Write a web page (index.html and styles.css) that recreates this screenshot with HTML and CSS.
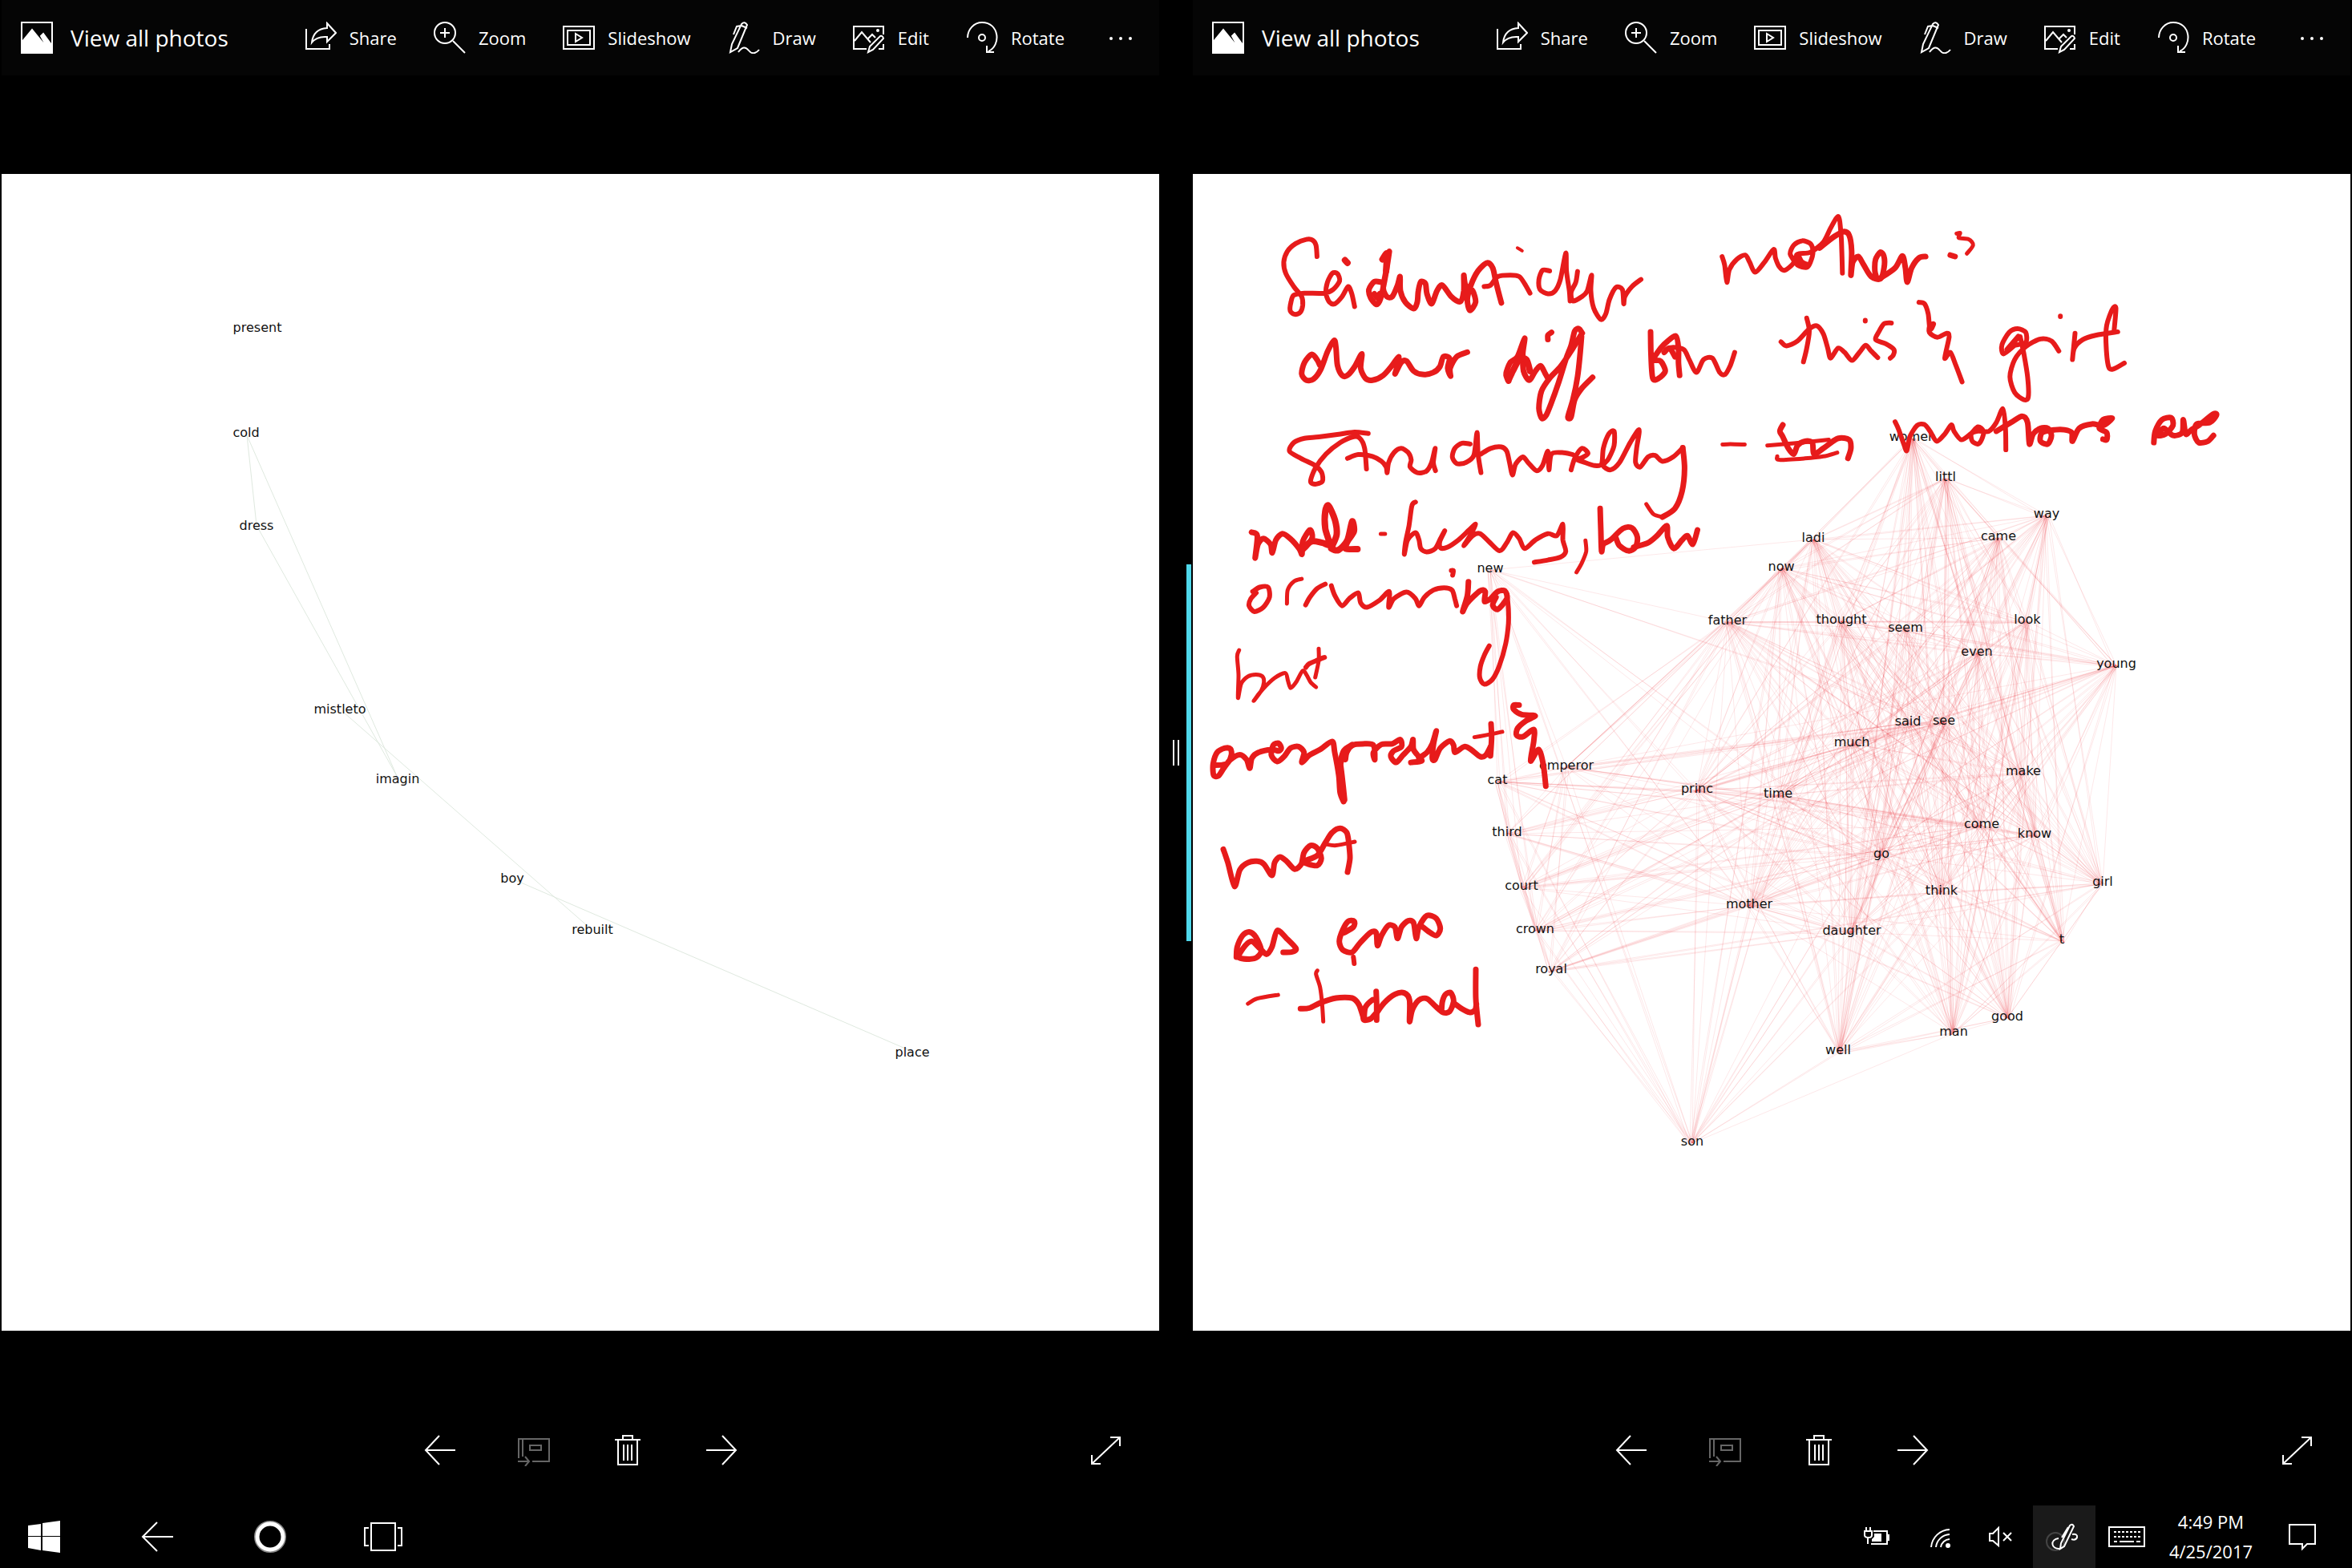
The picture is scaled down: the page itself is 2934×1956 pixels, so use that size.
FILE: index.html
```html
<!DOCTYPE html>
<html lang="en">
<head>
<meta charset="utf-8">
<meta name="viewport" content="width=device-width, initial-scale=1">
<title>Photos</title>
<link rel="stylesheet" href="styles.css">
</head>
<body>
<svg class="sprite" aria-hidden="true">
  <symbol id="i-photo" viewBox="0 0 40 40"><path d="M1 1H39V39H1Z"/><path class="solid" d="M1 26L14 10L35 36L25 18L28 15L39 30V39H1Z"/></symbol>
  <symbol id="i-share" viewBox="0 0 40 40"><path d="M2 9V34H31V28M28 2L39 14L28 25V19Q15 18 9 26Q11 9 28 8Z"/></symbol>
  <symbol id="i-zoom" viewBox="0 0 40 40"><circle cx="14" cy="14" r="13"/><path d="M24 24L39 39M14 8V20M8 14H20"/></symbol>
  <symbol id="i-slideshow" viewBox="0 0 40 40"><path d="M1 6H39V34H1ZM6 11H34V29H6ZM16 15L24 20L16 25Z"/></symbol>
  <symbol id="i-draw" viewBox="0 0 40 40"><path d="M3 38L5 28L17 3Q21 -1 24 4L12 33ZM17 5L11 6L7 16M17 5L24 8M13 38C18 31 22 31 26 36S35 40 39 35"/></symbol>
  <symbol id="i-edit" viewBox="0 0 40 40"><path d="M17 34H1V6H38V16M38 28V34H32M2 24L11 13L22 26M19 21L24 16L28 20M19 38L21 31L34 18Q37 17 38 21L25 35Z"/><circle class="solid" cx="31" cy="11" r="1"/></symbol>
  <symbol id="i-rotate" viewBox="0 0 40 40"><path d="M2 20A18 19 0 0 1 20 1C42 1 44 30 28 37M26 30V38H35"/><circle cx="20" cy="20" r="4"/></symbol>
  <symbol id="i-more" viewBox="0 0 40 40"><circle class="solid" cx="8" cy="21" r="1"/><circle class="solid" cx="20" cy="21" r="1"/><circle class="solid" cx="32" cy="21" r="1"/></symbol>
  <symbol id="i-prev" viewBox="0 0 40 40"><path d="M39 20H2M19 2L2 20L19 38"/></symbol>
  <symbol id="i-next" viewBox="0 0 40 40"><path d="M1 20H38M21 2L38 20L21 38"/></symbol>
  <symbol id="i-album" viewBox="0 0 40 40"><path d="M1 30V6H39V34H18M6 6V28M15 14H29V20H15ZM0 34H14M9 28L14 34L9 40"/></symbol>
  <symbol id="i-trash" viewBox="0 0 40 40"><path d="M4 7H36M14 7V2H26V7M8 7V38H32V7M15 13V33M20 13V33M25 13V33"/></symbol>
  <symbol id="i-expand" viewBox="0 0 40 40"><path d="M3 37L38 4M26 4H38V15M3 26V37H14"/></symbol>
</svg>

<main class="split">
  <section class="viewer" aria-label="Photo, left window">
    <header class="toolbar">
      <button class="home" type="button"><svg class="icon"><use href="#i-photo"/></svg>View all photos</button>
      <nav class="tools" aria-label="Photo tools">
        <button class="tool" type="button"><svg class="icon"><use href="#i-share"/></svg>Share</button>
        <button class="tool" type="button"><svg class="icon"><use href="#i-zoom"/></svg>Zoom</button>
        <button class="tool" type="button"><svg class="icon"><use href="#i-slideshow"/></svg>Slideshow</button>
        <button class="tool" type="button"><svg class="icon"><use href="#i-draw"/></svg>Draw</button>
        <button class="tool" type="button"><svg class="icon"><use href="#i-edit"/></svg>Edit</button>
        <button class="tool" type="button"><svg class="icon"><use href="#i-rotate"/></svg>Rotate</button>
        <button class="more" type="button" aria-label="More"><svg class="icon"><use href="#i-more"/></svg></button>
      </nav>
    </header>
    <svg class="photo" viewBox="2 217 1444 1443" role="img" aria-label="Word graph">
      <g class="edges edges-green">
        <path d="M308 543L320 655M308 543L495 968M322 659L495 968M428 888L735 1157M643 1098L1134 1310"/>
      </g>
      <g class="labels">
        <text x="321" y="409">present</text>
        <text x="307" y="540">cold</text>
        <text x="320" y="656">dress</text>
        <text x="424" y="885">mistleto</text>
        <text x="496" y="972">imagin</text>
        <text x="639" y="1096">boy</text>
        <text x="739" y="1160">rebuilt</text>
        <text x="1138" y="1313">place</text>
      </g>
    </svg>
    <footer class="controls">
      <div class="steps">
        <button type="button" aria-label="Previous"><svg class="icon"><use href="#i-prev"/></svg></button>
        <button type="button" aria-label="Add to album" disabled><svg class="icon"><use href="#i-album"/></svg></button>
        <button type="button" aria-label="Delete"><svg class="icon"><use href="#i-trash"/></svg></button>
        <button type="button" aria-label="Next"><svg class="icon"><use href="#i-next"/></svg></button>
      </div>
      <button class="expand" type="button" aria-label="Full screen"><svg class="icon"><use href="#i-expand"/></svg></button>
    </footer>
  </section>

  <div class="divider" role="separator" aria-orientation="vertical"><span class="grip"></span><span class="accent"></span></div>

  <section class="viewer" aria-label="Photo, right window">
    <header class="toolbar">
      <button class="home" type="button"><svg class="icon"><use href="#i-photo"/></svg>View all photos</button>
      <nav class="tools" aria-label="Photo tools">
        <button class="tool" type="button"><svg class="icon"><use href="#i-share"/></svg>Share</button>
        <button class="tool" type="button"><svg class="icon"><use href="#i-zoom"/></svg>Zoom</button>
        <button class="tool" type="button"><svg class="icon"><use href="#i-slideshow"/></svg>Slideshow</button>
        <button class="tool" type="button"><svg class="icon"><use href="#i-draw"/></svg>Draw</button>
        <button class="tool" type="button"><svg class="icon"><use href="#i-edit"/></svg>Edit</button>
        <button class="tool" type="button"><svg class="icon"><use href="#i-rotate"/></svg>Rotate</button>
        <button class="more" type="button" aria-label="More"><svg class="icon"><use href="#i-more"/></svg></button>
      </nav>
    </header>
    <svg class="photo" viewBox="1488 217 1444 1443" role="img" aria-label="Word graph with handwritten notes">
      <g class="edges edges-red" id="edges"></g>
      <g class="labels" id="words">
        <text x="2386" y="545">women</text>
        <text x="2427" y="595">littl</text>
        <text x="2553" y="641">way</text>
        <text x="2493" y="669">came</text>
        <text x="2262" y="671">ladi</text>
        <text x="2222" y="707">now</text>
        <text x="1859" y="709">new</text>
        <text x="2155" y="774">father</text>
        <text x="2297" y="773">thought</text>
        <text x="2377" y="783">seem</text>
        <text x="2529" y="773">look</text>
        <text x="2466" y="813">even</text>
        <text x="2640" y="828">young</text>
        <text x="2380" y="900">said</text>
        <text x="2425" y="899">see</text>
        <text x="2310" y="926">much</text>
        <text x="1954" y="955">emperor</text>
        <text x="1868" y="973">cat</text>
        <text x="2117" y="984">princ</text>
        <text x="2218" y="990">time</text>
        <text x="2524" y="962">make</text>
        <text x="1880" y="1038">third</text>
        <text x="2472" y="1028">come</text>
        <text x="2538" y="1040">know</text>
        <text x="2347" y="1065">go</text>
        <text x="1898" y="1105">court</text>
        <text x="2422" y="1111">think</text>
        <text x="2182" y="1128">mother</text>
        <text x="2623" y="1100">girl</text>
        <text x="1915" y="1159">crown</text>
        <text x="2310" y="1161">daughter</text>
        <text x="2572" y="1172">t</text>
        <text x="1935" y="1209">royal</text>
        <text x="2504" y="1268">good</text>
        <text x="2437" y="1287">man</text>
        <text x="2293" y="1310">well</text>
        <text x="2111" y="1424">son</text>
      </g>
      <g class="ink" id="ink"></g>
    </svg>
    <footer class="controls">
      <div class="steps">
        <button type="button" aria-label="Previous"><svg class="icon"><use href="#i-prev"/></svg></button>
        <button type="button" aria-label="Add to album" disabled><svg class="icon"><use href="#i-album"/></svg></button>
        <button type="button" aria-label="Delete"><svg class="icon"><use href="#i-trash"/></svg></button>
        <button type="button" aria-label="Next"><svg class="icon"><use href="#i-next"/></svg></button>
      </div>
      <button class="expand" type="button" aria-label="Full screen"><svg class="icon"><use href="#i-expand"/></svg></button>
    </footer>
  </section>
</main>

<footer class="taskbar">
  <div class="system">
    <button type="button" aria-label="Start"><svg class="icon" viewBox="0 0 40 40"><path class="fill" d="M0 6L16 4V19H0ZM18 3L40 0V19H18ZM0 20H16V37L0 34ZM18 20H40V40L18 37Z"/></svg></button>
    <button type="button" aria-label="Back"><svg class="icon" viewBox="0 0 40 40"><path d="M40 20H2M20 2L2 20L20 38"/></svg></button>
    <button type="button" aria-label="Cortana"><svg class="icon" viewBox="0 0 40 40"><circle class="halo" cx="20" cy="20" r="17"/><circle class="ring" cx="20" cy="20" r="16"/></svg></button>
    <button type="button" aria-label="Task view"><svg class="icon wide" viewBox="0 0 48 40"><path d="M9 3H39V37H9ZM6 9H1V31H6M42 9H47V31H42"/></svg></button>
  </div>
  <div class="tray">
    <button type="button" aria-label="Battery, charging"><svg class="icon" viewBox="0 0 40 40"><path d="M16 13H33V29H13M33 18H35V24H33M7 8V13M12 8V13M5 13H14V18Q14 21 10 21Q5 21 5 18ZM9 21V29"/><path class="fill" d="M17 16H26V26H14V23L17 20Z"/></svg></button>
    <button type="button" aria-label="Wi-Fi"><svg class="icon" viewBox="0 0 40 40"><path d="M10 33A24 24 0 0 1 33 11M16 33A18 18 0 0 1 33 17M22 33A12 12 0 0 1 33 23"/><circle class="fill" cx="31" cy="31" r="3"/></svg></button>
    <button type="button" aria-label="Volume, muted"><svg class="icon" viewBox="0 0 40 40"><path d="M5 16H9L16 9V31L9 25H5ZM22 15L32 25M32 15L22 25"/></svg></button>
    <button class="pen" type="button" aria-label="Windows Ink"><svg class="icon" viewBox="0 0 40 40"><circle class="dim" cx="9" cy="26" r="11"/><path d="M15 35C3 36 2 23 13 22M15 35L16 28L27 6Q30 3 32 7L20 32ZM25 8L17 21M30 17Q37 16 36 21Q34 25 29 23"/></svg></button>
    <button type="button" aria-label="Touch keyboard"><svg class="icon wide" viewBox="0 0 48 40"><path d="M2 8H46V32H2Z"/><path class="dots" d="M8 14H41M8 20H41"/><path d="M8 26H12M15 26H33M36 26H41"/></svg></button>
    <button class="clock" type="button"><span>4:49 PM</span><span>4/25/2017</span></button>
    <button class="notes" type="button" aria-label="Notifications"><svg class="icon" viewBox="0 0 40 40"><path d="M4 5H36V29H26L20 35V29H4Z"/></svg></button>
  </div>
</footer>
<script src="script.js"></script>
</body>
</html>
```
FILE: styles.css
```css
* { box-sizing: border-box; }

body {
  margin: 0;
  min-height: 100vh;
  display: flex;
  flex-direction: column;
  background: #000;
  color: #fff;
  font-family: "Open Sans", "Noto Sans", sans-serif;
  font-size: 22px;
  line-height: 30px;
}

button {
  display: flex;
  align-items: center;
  justify-content: center;
  margin: 0;
  padding: 0;
  border: 0;
  background: none;
  color: inherit;
  font: inherit;
}

.sprite { display: none; }

.icon {
  display: block;
  flex: none;
  width: 40px;
  height: 40px;
  overflow: visible;
  fill: none;
  stroke: currentColor;
  stroke-width: 2;
}
.icon.wide { width: 48px; }
.solid { fill: currentColor; }
.fill { fill: currentColor; stroke: none; }

/* Two snapped windows */
.split {
  flex: 1;
  display: grid;
  grid-template-columns: 1fr 42px 1fr;
  padding: 0 2px;
}
.viewer {
  display: flex;
  flex-direction: column;
  min-width: 0;
}

.toolbar {
  display: flex;
  align-items: center;
  justify-content: space-between;
  height: 94px;
  padding: 0 24px;
  background: #050505;
  white-space: nowrap;
}
.home {
  gap: 22px;
  font-size: 28px;
}
.tools {
  display: flex;
  align-items: center;
  gap: 46px;
}
.tool { gap: 16px; }
.more { width: 48px; }

.photo {
  display: block;
  width: 100%;
  height: auto;
  margin: 123px 0 auto;
  background: #fff;
}
.labels {
  fill: #111;
  font-family: "DejaVu Sans", sans-serif;
  font-size: 16px;
  text-anchor: middle;
  dominant-baseline: middle;
}
.edges { fill: none; }
.edges-green { stroke: #dfe9df; stroke-width: 1; }
.edges-red { stroke: #ea2f3a; stroke-opacity: 0.11; stroke-width: 1; }
.ink {
  fill: none;
  stroke: #e71b1b;
  stroke-width: 7;
  stroke-linecap: round;
  stroke-linejoin: round;
}

.controls {
  display: grid;
  grid-template-columns: 1fr auto 1fr;
  align-items: center;
  height: 138px;
  padding: 0 47px;
}
.steps {
  grid-column: 2;
  display: flex;
  gap: 77px;
}
.steps button:disabled { color: #666; }
.expand { justify-self: end; }

.divider {
  display: grid;
  grid-template: 1fr / 1fr;
  align-items: center;
}
.grip,
.accent { grid-area: 1 / 1; }
.grip {
  justify-self: center;
  width: 8px;
  height: 32px;
  border: solid #eee;
  border-width: 0 2px;
}
.accent {
  justify-self: end;
  width: 6px;
  height: 25%;
  margin-right: 2px;
  background: #4fd8eb;
}

/* Taskbar */
.taskbar {
  display: flex;
  justify-content: space-between;
  height: 78px;
  padding: 0 15px 0 0;
}
.system,
.tray { display: flex; }
.system button { width: 141px; }
.system button:first-child { width: 110px; margin-right: 15px; }
.tray button { width: 78px; }
.ring { stroke-width: 5; }
.halo { stroke: #888; stroke-width: 6; }
.dim { stroke: #444; }
.dots { stroke-dasharray: 3 2; }
.tray .pen { background: #1a1a1a; }
.tray .clock {
  width: 132px;
  flex-direction: column;
  line-height: 37px;
}
.tray .notes { width: 95px; }
```
FILE: script.js
```js
// Draws the edges of the word graph and the pen strokes written over it.
const NS = 'http://www.w3.org/2000/svg';

function addPath(parent, d, width) {
  const path = document.createElementNS(NS, 'path');
  path.setAttribute('d', d);
  if (width) path.style.strokeWidth = width;
  parent.appendChild(path);
}

// Words of the palace group have fewer links than the rest.
const palace = ['new', 'emperor', 'cat', 'third', 'court', 'crown', 'royal', 'son'];
const palaceLinks = ['princ', 'mother', 'father', 'daughter', 'said', 'see', 'time', 'ladi', 'now', 'young', 'come', 'go'];
const extraLinks = ['son-man', 'well-son', 'think-son', 'thought-son', 'girl-royal', 'know-court'];
const noLinks = ['ladi-royal', 'now-third', 'ladi-crown', 'new-young', 'now-new', 'new-said', 'new-come', 'new-daughter',
  'now-cat', 'young-third', 'young-cat', 'new-royal', 'ladi-cat', 'young-son', 'young-royal'];

const words = [...document.querySelectorAll('#words text')].map(t => ({
  name: t.textContent, x: +t.getAttribute('x'), y: +t.getAttribute('y') + 2
}));

function linked(a, b) {
  const key = a + '-' + b, back = b + '-' + a;
  if (noLinks.includes(key) || noLinks.includes(back)) return false;
  if (extraLinks.includes(key) || extraLinks.includes(back)) return true;
  const pa = palace.includes(a), pb = palace.includes(b);
  if (pa && pb) return true;
  if (pa) return palaceLinks.includes(b);
  if (pb) return palaceLinks.includes(a);
  return true;
}

const edges = document.getElementById('edges');
words.forEach((a, i) => {
  words.slice(i + 1).forEach((b, j) => {
    if (!linked(a.name, b.name)) return;
    addPath(edges, `M${a.x} ${a.y}L${b.x} ${b.y}`);
    if ((i * 7 + j * 5) % 3) {
      const s = (i + j) % 2 ? 3 : -3;
      addPath(edges, `M${a.x + s} ${a.y}L${b.x - s} ${b.y + 2}`);
    }
  });
});

// Pen strokes, one sheet per part of the page: origin, units per pixel, strokes.
// A stroke is a list of points, with its own pen width after the bar.
const sheets = [
  { x: 1480, y: 220, ux: 2.24, uy: 2.8, strokes: [
    '365,280 362,240 352,222 335,220 305,235 282,262 272,300 278,340 300,385 322,420 325,450 318,475 303,482 290,470 292,440 300,415 330,408 385,408 410,395 428,365 422,340 408,338 394,370 390,410 400,440 415,445 435,420 452,385 462,410 470,455|6',
    '443,293 450,302|8',
    '545,370 525,368 510,395 515,425 530,447 540,435 548,400 560,320 567,262 558,330 550,390 560,420 575,420 590,380 597,350 598,400 612,440 635,462 645,440 648,400 655,368 668,375 672,410 685,445 700,400 715,380 740,420 765,438 775,400 775,345 780,380 800,400 808,440 792,468 785,430 795,380 815,330 840,302 856,320 865,370 880,442',
    '548,290 560,270 558,330|8',
    '525,410 533,425 540,410',
    '832,385 850,380 870,350 905,345 930,350 945,375 960,408|6',
    '925,250 938,260|4',
    '1015,330 995,328 985,360 988,395 1010,410 1030,400 1045,360 1060,268 1062,330 1070,400 1072,435|6',
    '1093,332 1088,370 1075,405 1080,435 1105,420 1120,400 1132,345 1130,400 1138,460 1158,500 1172,480 1182,430 1200,388 1218,395 1222,445 1225,420 1245,385 1270,360|6',
    '373,660 365,640 350,622 330,650 322,690 335,712 355,708 375,675 395,610 413,573 418,600 422,660 435,695 450,695 470,665 490,620 487,670 500,705 520,712 550,695 575,660 593,630 590,660 583,690 600,650 615,645 635,680 660,692 690,685 708,665 718,630 735,635 730,670 738,698 737,670 755,630 785,614',
    '900,715 893,690 905,650 925,630 945,565 940,620 942,680 958,712 975,680 990,662 1003,690 1010,705',
    '900,712 912,680 930,640 950,640 960,680|8',
    '1106,548 1097,532 1085,540 1075,590 1060,640 1040,720 1020,790 1005,835 993,845 985,810 992,750 1015,705 1045,665 1075,610 1102,555',
    '1104,560 1100,620 1093,700 1080,780 1066,840 1075,840 1085,780 1105,740 1135,702',
    '1010,570 1010,555 1020,545',
    '1297,543 1298,620 1303,705 1320,705 1338,680 1325,645 1305,640 1325,600 1345,575 1368,558 1375,600 1375,650 1378,695',
    '1335,615 1350,600 1365,630',
    '1340,605 1360,597 1390,605 1405,640 1425,685 1445,640 1470,635 1490,685 1505,692 1520,660 1532,615|6',
    '508,898 470,893 430,900 370,910 330,915 300,930 288,960 320,985 360,1010 378,1035 380,1065 360,1075 347,1065 360,1020 390,970 430,930 465,910 485,915 498,950 503,1022|6',
    '450,985 480,972 520,978 545,995 558,1015 561,1035 565,1000 580,965 600,950 620,965 628,990 625,1015 645,1035 670,1030 685,1000 695,950 690,1000 696,1028|6',
    '793,935 770,932 750,950 743,980 755,1003 780,1000 803,975 812,895 815,970 823,1035|6',
    '823,970 850,950 880,945 895,960 903,1000 911,1043 920,1005 940,980 955,1000 978,1028 995,1010 1010,960 1013,1025 1020,970 1050,965 1080,972|6',
    '1075,1025 1085,985 1105,950 1122,968 1100,985 1085,985 1110,998 1140,1010 1160,1005 1165,950 1180,900 1195,890 1195,940 1180,985 1165,1010 1185,1025 1210,1000 1240,930 1265,885 1258,950 1255,1000 1268,1015 1290,980 1310,975 1330,995 1360,980 1387,948|6',
    '1387,948 1392,1020 1385,1100 1365,1160 1330,1190',
    '1330,1190 1305,1180 1285,1145|5',
    '1498,937 1520,935 1560,937|5',
    '182,1243 198,1255 192,1333 200,1285 215,1265 235,1285 240,1315 250,1270 268,1248 290,1265 315,1300 323,1320 325,1275 345,1235 352,1260 340,1285 325,1305',
    '325,1300 350,1275 380,1280 400,1285 388,1230 388,1170 397,1150 415,1200 420,1250 408,1290 405,1300 425,1305 450,1270 463,1205 468,1240 450,1275 445,1300 478,1302|8',
    '543,1249 555,1249|5',
    '640,1138 630,1150 622,1220 612,1280 609,1320 618,1270 640,1245 650,1270 655,1300 672,1312 695,1300 710,1265 722,1238 708,1275 710,1298 730,1295 760,1270 790,1235 808,1215 795,1250 775,1290 800,1255 820,1248 845,1275 875,1308 895,1280 912,1245 930,1265 945,1300 975,1270 1010,1248 1035,1255 1052,1215 1052,1270 1060,1310 1045,1330 1010,1340 972,1348|6',
    '1115,1272 1117,1310 1105,1350 1090,1383|5',
    '1156,1160 1158,1240 1160,1310 1165,1285 1185,1270 1220,1230 1245,1228 1260,1260 1255,1295 1235,1308 1210,1290 1200,1262',
    '1250,1295 1290,1280 1315,1255 1342,1220 1345,1260 1362,1300 1385,1270 1400,1255 1415,1285 1428,1235',
    '185,1450 205,1435 228,1435 232,1470 215,1505 190,1520 175,1500 180,1475 195,1455|6',
    '322,1406 300,1415 283,1445 281,1492|5',
    '388,1424 365,1440 345,1470 333,1497|6',
    '405,1430 415,1465 435,1500 455,1475 480,1455 487,1490 505,1505 540,1480 567,1450 565,1505 580,1475 615,1452 640,1475 650,1500 665,1470 690,1445 720,1437 742,1445 750,1475 755,1500|6',
    '740,1377 746,1377 744,1393|6',
    '788,1416 785,1465 772,1520 785,1490 820,1448 835,1450 833,1485 850,1475 870,1450 890,1448 895,1475 870,1512 856,1498 865,1470'
  ] },
  { x: 2100, y: 220, ux: 2.178, uy: 2.8, strokes: [
    '105,280 112,310 118,370 125,325 145,290 168,275 180,300 195,335 220,300 245,255 250,285 260,315 275,328 300,300 290,270 300,240 322,225 345,235 352,265 345,300 335,318 310,310 305,285 315,270 345,265 380,230 400,180 421,140 428,200 430,250 432,338|6',
    '310,275 320,300 335,310|8',
    '370,250 410,210 435,193 450,205 457,260 455,345 460,300 475,280 490,310 510,350 535,358 545,320 545,280 535,265 522,290 520,330 525,355',
    '535,356 575,320 595,278 603,320 608,370 620,320 640,285 658,280',
    '725,275 738,280|7',
    '742,200 752,198 748,215 775,220 787,240 770,270|5',
    '335,495 342,540 335,600 326,648|6',
    '265,578 280,592 310,575 340,535 362,522 380,550 392,600 400,635 420,600 438,615 458,643 478,615 495,590 510,610 528,633|6',
    '494,503 494,505|6',
    '565,512 545,515 530,545 522,570 550,585 572,605 570,625 562,635|6',
    '640,440 655,445 665,480 670,535 680,515 670,520 668,545 690,562 715,548 722,560 710,635 725,615 740,660 757,718|6',
    '900,590 870,620 865,590 885,545 908,532 930,545 930,580 900,590|6',
    '910,560 880,605',
    '915,560 925,620 935,700 937,770 925,780 900,755 887,700 900,640 930,595 970,568 1000,575 1020,610|6',
    '1024,488 1024,490|6',
    '1064,548 1060,600 1057,640 1062,600 1085,570 1120,555 1180,543|6',
    '1170,540 1175,460 1165,465 1150,520 1148,580 1155,665 1170,672 1198,652|6',
    '270,868 262,890 270,910 285,950 300,970 310,940 330,925 350,930 355,970 380,950 420,915 450,920 455,950 447,985',
    '228,940 300,932 395,920|5',
    '255,978 260,990 330,985 380,978 418,965|5',
    '575,857 585,885 600,940 607,958 615,910 635,870 655,867 670,890 688,925 710,900 728,868 735,890 755,920 780,900 800,875 815,890 810,920 800,935 785,925 782,900 800,890 830,890 850,860 868,812 875,880 876,955|6',
    '850,890 890,860 920,838 935,860 940,935 950,900 970,880 990,880 1000,905 990,935 970,925 975,895 1010,885 1035,885 1055,895 1057,925 1075,880 1110,865 1140,870 1165,845 1140,850 1130,880 1150,895 1150,920 1140,918',
    '1278,930 1282,890 1300,850 1325,843 1330,870 1310,900 1290,905 1305,880 1330,905 1355,895 1358,850 1365,900 1380,885 1400,870 1440,830 1448,835 1430,860 1395,865 1388,900 1400,930 1425,925 1440,905'
  ] },
  { x: 1480, y: 760, ux: 3, uy: 2.8, strokes: [
    '1200,-52 1205,0 1205,50 1195,120 1170,200 1145,245 1115,262 1098,240 1100,200 1115,160 1133,128|6',
    '197,143 190,165 195,230 193,310 205,260 230,235 260,228 285,235 290,255 280,285 252,320 285,280 330,240 370,223 380,250 390,275 410,255 435,215 450,230 465,255 485,272|5',
    '495,138 495,180 482,238|5',
    '447,203 460,190 490,178 517,168|6',
    '100,545 150,540 168,510 165,488 145,485 115,500 100,540 102,580 120,582 140,555 165,525 200,508 225,525 237,555 245,520 270,500 320,490 345,495 355,485 345,468 325,475 318,510 340,532 365,515 390,485 420,480 440,500 432,535 460,510 500,490 545,462 555,500 570,580 575,640 588,672',
    '592,665 582,580 575,530',
    '575,540 590,495 620,475|8',
    '595,525 600,500 620,475 660,470 700,475 705,525 700,500 730,472 770,470 800,455 805,480 775,495 765,515 785,535 810,510 840,480 848,455 850,490 870,515 880,530 840,535',
    '870,520 900,500 920,470 935,425 925,470 920,520 930,525 950,485 985,460 1000,475 1005,500 1040,480 1065,490 1100,515 1120,510 1138,480',
    '1140,400 1142,450 1138,512',
    '1078,447 1120,440 1182,428|5',
    '1245,335 1225,335 1225,350 1255,368 1305,372 1270,390 1240,415 1235,440 1260,445 1300,420 1300,460 1288,530 1318,490 1335,540 1345,618',
    '138,838 155,885 180,968 200,910 230,885 265,880 290,890 320,930 330,885 350,865 375,880 405,908 430,890 440,850 465,825 490,835 505,870 490,895 455,890 440,880 490,860 520,815 545,780 575,765 600,780 608,820 612,870 603,918',
    '520,820 560,825 630,812|5',
    '187,1215 190,1180 210,1140 235,1127 260,1145 280,1190 265,1215 235,1222 195,1215 220,1175 245,1160 275,1185 300,1205 320,1180 340,1122 375,1150 410,1185 395,1197 362,1198',
    '590,1130 625,1110 628,1090 605,1090 585,1120 572,1160 585,1190 620,1198 650,1165 690,1128 710,1130 715,1175 730,1140 755,1105 780,1110 790,1150 805,1110 830,1088 850,1095 860,1150 870,1110 900,1070 935,1080 950,1115 935,1140 905,1125 885,1110',
    '625,1215 628,1238|6',
    '230,1378 265,1360 343,1347|5',
    '490,1262 485,1275 500,1320 508,1380 512,1440|5',
    '427,1395 460,1393 500,1375 560,1358 620,1358 645,1380 660,1420 665,1435 690,1430 710,1410',
    '665,1425 670,1390 695,1365 705,1365',
    '710,1335 712,1380 712,1435',
    '712,1410 740,1375 780,1345 815,1340 835,1365 835,1440 845,1400 870,1365 900,1360 930,1385 960,1408 985,1405 1000,1370 990,1340 970,1345 958,1370 955,1400',
    '1000,1375 1030,1395 1060,1408 1080,1400 1085,1380',
    '1083,1258 1083,1360 1092,1450'
  ] }
];

// Catmull-Rom spline through the points, so that strokes stay smooth.
function smooth(p) {
  const n = p.length;
  const f = v => v.toFixed(1);
  let d = `M${f(p[0][0])} ${f(p[0][1])}`;
  for (let i = 0; i < n - 1; i++) {
    const a = p[Math.max(i - 1, 0)], b = p[i], c = p[i + 1], e = p[Math.min(i + 2, n - 1)];
    d += `C${f(b[0] + (c[0] - a[0]) / 7)} ${f(b[1] + (c[1] - a[1]) / 7)} `
      + `${f(c[0] - (e[0] - b[0]) / 7)} ${f(c[1] - (e[1] - b[1]) / 7)} ${f(c[0])} ${f(c[1])}`;
  }
  return d;
}

const ink = document.getElementById('ink');
sheets.forEach(sheet => {
  sheet.strokes.forEach(stroke => {
    const [list, width] = stroke.split('|');
    const points = list.split(' ').map(pair => {
      const [x, y] = pair.split(',').map(Number);
      return [sheet.x + x / sheet.ux, sheet.y + y / sheet.uy];
    });
    addPath(ink, smooth(points), width);
  });
});
```
